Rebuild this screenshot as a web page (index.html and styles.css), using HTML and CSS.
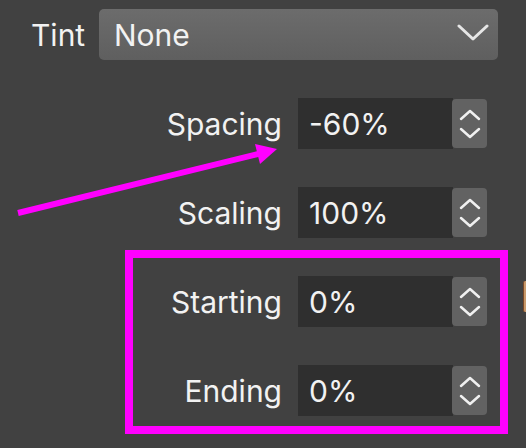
FILE: index.html
```html
<!DOCTYPE html>
<html>
<head>
<meta charset="utf-8">
<link rel="stylesheet" href="styles.css">
</head>
<body>
<div class="panel">
  <div class="tint-row">
    <span class="tint-label">Tint</span>
    <div class="select">
      <span class="select-value">None</span>
      <svg class="select-chevron" width="32" height="18" viewBox="0 0 32 18"><polyline points="2,2 16,15 30,2" fill="none" stroke="#e6e6e6" stroke-width="3" stroke-linecap="round" stroke-linejoin="round"/></svg>
    </div>
  </div>
  <div class="row">
    <span class="label">Spacing</span>
    <div class="field">-60%</div>
    <div class="stepper"><svg width="24" height="32" viewBox="0 0 24 32"><polyline points="3,11 12,3 21,11" fill="none" stroke="#f0f0f0" stroke-width="2.5" stroke-linecap="round" stroke-linejoin="round"/><polyline points="3,21 12,29 21,21" fill="none" stroke="#f0f0f0" stroke-width="2.5" stroke-linecap="round" stroke-linejoin="round"/></svg></div>
  </div>
  <div class="row">
    <span class="label">Scaling</span>
    <div class="field">100%</div>
    <div class="stepper"><svg width="24" height="32" viewBox="0 0 24 32"><polyline points="3,11 12,3 21,11" fill="none" stroke="#f0f0f0" stroke-width="2.5" stroke-linecap="round" stroke-linejoin="round"/><polyline points="3,21 12,29 21,21" fill="none" stroke="#f0f0f0" stroke-width="2.5" stroke-linecap="round" stroke-linejoin="round"/></svg></div>
  </div>
  <div class="row">
    <span class="label">Starting</span>
    <div class="field">0%</div>
    <div class="stepper"><svg width="24" height="32" viewBox="0 0 24 32"><polyline points="3,11 12,3 21,11" fill="none" stroke="#f0f0f0" stroke-width="2.5" stroke-linecap="round" stroke-linejoin="round"/><polyline points="3,21 12,29 21,21" fill="none" stroke="#f0f0f0" stroke-width="2.5" stroke-linecap="round" stroke-linejoin="round"/></svg></div>
  </div>
  <div class="row">
    <span class="label">Ending</span>
    <div class="field">0%</div>
    <div class="stepper"><svg width="24" height="32" viewBox="0 0 24 32"><polyline points="3,11 12,3 21,11" fill="none" stroke="#f0f0f0" stroke-width="2.5" stroke-linecap="round" stroke-linejoin="round"/><polyline points="3,21 12,29 21,21" fill="none" stroke="#f0f0f0" stroke-width="2.5" stroke-linecap="round" stroke-linejoin="round"/></svg></div>
  </div>
</div>
<div class="highlight-box"></div>
<svg class="arrow" width="526" height="448" viewBox="0 0 526 448"><line x1="18" y1="213" x2="262" y2="153" stroke="#ff00ff" stroke-width="6"/><polygon points="277,149 255,144 260,164" fill="#ff00ff"/></svg>
<div class="edge-object"></div>
</body>
</html>
```

FILE: styles.css
```css
html, body {
  margin: 0;
  padding: 0;
}
body {
  width: 526px;
  height: 448px;
  background: #414141;
  font-family: Inter, "Noto Sans", "Liberation Sans", sans-serif;
  color: #f2f2f2;
  overflow: hidden;
  position: relative;
}
.panel {
  display: flex;
  flex-direction: column;
  gap: 38px;
  padding-top: 9px;
}
.tint-row {
  display: flex;
  align-items: center;
  gap: 16px;
  padding-left: 31px;
  padding-right: 28px;
}
.tint-label {
  width: 52px;
  white-space: nowrap;
}
.tint-label, .label, .select-value, .field {
  font-size: 30px;
  line-height: 1;
}
.select {
  flex: 1;
  height: 51px;
  border-radius: 5px;
  background: linear-gradient(#6c6c6c, #5f5f5f);
  display: flex;
  align-items: center;
  justify-content: space-between;
  padding-left: 15px;
  padding-right: 9px;
  box-sizing: border-box;
}
.select-chevron {
  margin-top: -4px;
}
.row {
  display: flex;
  align-items: center;
  height: 51px;
}
.label {
  width: 282px;
  text-align: right;
  margin-right: 16px;
}
.field {
  width: 155px;
  height: 51px;
  box-sizing: border-box;
  background: #2f2f2f;
  padding-left: 11px;
  display: flex;
  align-items: center;
}
.stepper {
  width: 35px;
  height: 49px;
  margin-left: -1px;
  background: #626262;
  border-radius: 4px;
  display: flex;
  align-items: center;
  justify-content: center;
}
.highlight-box {
  position: absolute;
  left: 125px;
  top: 250px;
  width: 383px;
  height: 184px;
  box-sizing: border-box;
  border: 8px solid #ff00ff;
}
.arrow {
  position: absolute;
  left: 0;
  top: 0;
}
.edge-object {
  position: absolute;
  left: 523px;
  top: 281px;
  width: 6px;
  height: 31px;
  background: #c8996a;
  border-left: 1px solid #7a4a2a;
  border-radius: 2px;
}
```
